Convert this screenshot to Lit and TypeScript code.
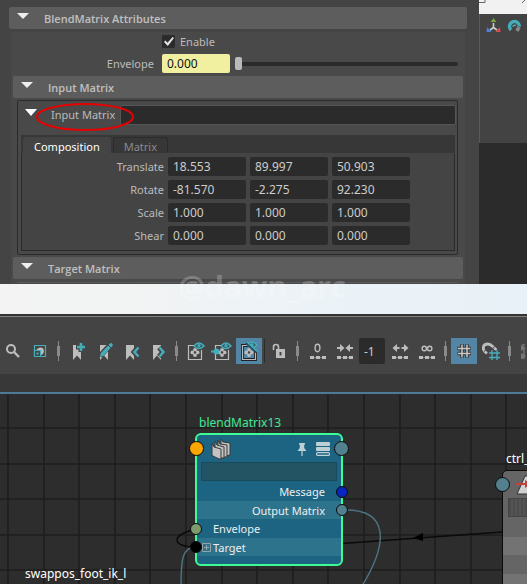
import { LitElement, html, svg, css } from "lit";
import { customElement } from "lit/decorators.js";

const TEAL = "#45adba";
const LIGHT = "#bdbdbd";

/* Toolbar icons, drawn on a 26 x 26 grid. */
const eye = (x: number, y: number) => svg`
  <path d="M${x} ${y + 3} Q${x + 5} ${y - 3} ${x + 10} ${y + 3} Q${x + 5} ${y + 8} ${x} ${y + 3}Z" fill="#35545a" stroke=${TEAL} stroke-width="1.5"/>
  <circle cx=${x + 5} cy=${y + 2.7} r="1.6" fill=${TEAL}/>`;
const frame = svg`
  <path d="M12 7.5H6.500V21.5H19.500V12" fill="none" stroke=${LIGHT} stroke-width="1.2"/>
  <g fill=${LIGHT}><circle cx="13" cy="11.800" r="1.9"/><circle cx="13" cy="17" r="1.9"/><circle cx="10.400" cy="14.400" r="1.9"/><circle cx="15.600" cy="14.400" r="1.9"/></g>
  <circle cx="13" cy="14.400" r="1.2" fill="#444"/>`;
const mark = svg`<path d="M9 7H17V22L13 17.5L9 22Z" fill=${LIGHT}/>`;
const dots = svg`<path d="M5 18h4v3H5zM11 18h4v3h-4zM17 18h4v3h-4zM9.500 19h1v1h-1zM15.500 19h1v1h-1z" fill=${LIGHT}/>`;

const icons: Record<string, unknown> = {
  search: svg`<circle cx="11" cy="11" r="4" fill="none" stroke=${LIGHT} stroke-width="2"/><path d="M14 14L19 19" stroke=${LIGHT} stroke-width="2.4"/>`,
  frameAll: svg`<path d="M7.500 7.500H18.500V18.500H7.500Z" fill="none" stroke=${TEAL} stroke-width="1.2"/>
    <path d="M9.500 12C11 8.500 16.500 8.500 16.800 12C17 15 16 16.500 14 17V12Z" fill=${LIGHT}/>
    <path d="M7.500 12.500H13.500V18.500H7.500Z" fill="#444" stroke=${TEAL} stroke-width="1.200"/><path d="M9.500 14.500h2v2h-2z" fill=${TEAL}/>`,
  markAdd: svg`${mark}<path d="M17 4v10M12 9h10" stroke="#444" stroke-width="5"/><path d="M17 5v8M13 9h8" stroke=${TEAL} stroke-width="2.600"/>`,
  markEdit: svg`${mark}<path d="M9 18L20 6" stroke="#444" stroke-width="5.500"/><path d="M11.500 16L20 7" stroke=${TEAL} stroke-width="3.600" stroke-linecap="round"/><path d="M9 19L10 15L13 17.500Z" fill=${TEAL}/><path d="M17 7L20 10" stroke="#444" stroke-width="1"/>`,
  markPrev: svg`<path d="M8 7H16V22L12 17.500L8 22Z" fill=${LIGHT}/><path d="M20 9.500L16 14L20 18.500" fill="none" stroke="#444" stroke-width="5"/><path d="M20.500 9.500L16.500 14L20.500 18.500" fill="none" stroke=${TEAL} stroke-width="2.500"/>`,
  markNext: svg`<path d="M8 7H16V22L12 17.500L8 22Z" fill=${LIGHT}/><path d="M14 9.500L18 14L14 18.500" fill="none" stroke="#444" stroke-width="5"/><path d="M14.500 9.500L18.500 14L14.500 18.500" fill="none" stroke=${TEAL} stroke-width="2.500"/>`,
  show: svg`${frame}<path d="M12 3h12v8H15L12 9z" fill="#444"/>${eye(12, 5)}`,
  showIn: svg`${frame}<path d="M12 3h12v8H15L12 9z" fill="#444"/>${eye(12, 5)}<path d="M2 13.500h4" stroke=${TEAL} stroke-width="2"/><circle cx="7.500" cy="13.500" r="3" fill=${TEAL}/>`,
  hide: svg`<path d="M12 7.500H6.500V21.500H19.500V12" fill="none" stroke="#222" stroke-width="3"/>${frame}${eye(11, 4)}<path d="M10 5L21 15" stroke="#27485a" stroke-width="2"/><path d="M11 4L22 14" stroke=${TEAL} stroke-width="1.400"/>`,
  unlock: svg`<path d="M7.500 12V9Q7.500 6.500 10 6.500Q12.500 6.500 12.500 9V12" fill="none" stroke=${LIGHT} stroke-width="1.600"/><path d="M10 11h9v9h-9z" fill=${LIGHT}/><path d="M13.500 14h2v3.500h-2z" fill="#444"/>`,
  zero: svg`<ellipse cx="12.500" cy="10" rx="2.400" ry="3.700" fill="none" stroke=${LIGHT} stroke-width="1.400"/>${dots}`,
  shrink: svg`<path d="M5 10h4M21 10h-4" stroke=${LIGHT} stroke-width="2"/><path d="M8 6L12.500 10L8 14ZM18 6L13.500 10L18 14Z" fill=${LIGHT}/>${dots}`,
  grow: svg`<path d="M10 6L5.500 10L10 14ZM17 6L21.500 10L17 14Z" fill=${LIGHT}/><path d="M9 10h3.500M18 10h-3.500" stroke=${LIGHT} stroke-width="2"/>${dots}`,
  infinite: svg`<circle cx="10.300" cy="10.500" r="2.200" fill="none" stroke=${LIGHT} stroke-width="1.400"/><circle cx="15.700" cy="10.500" r="2.200" fill="none" stroke=${LIGHT} stroke-width="1.400"/>${dots}`,
  grid: svg`<path d="M11 6v14M16 6v14M6.500 10.500h13.500M6.500 15.500h13.500" stroke="#333" stroke-width="3.500"/><path d="M11 6.500v13M16 6.500v13M7 10.500h12.500M7 15.500h12.500" stroke="#c9c9c9" stroke-width="1.500"/>`,
  snap: svg`<path d="M9 15.500C3 11 5 6 10 6C14 6 15 9.500 18.500 12" fill="none" stroke=${LIGHT} stroke-width="2.800"/><path d="M6 13.500l3-2.500M14 11.500l2.500-3" stroke="#444" stroke-width="1"/><path d="M14 12v10M19 12v10M11 15h11M11 19.500h11" fill="none" stroke="#444" stroke-width="3"/><path d="M14 12v10M19 12v10M11 15h11M11 19.500h11" fill="none" stroke=${TEAL} stroke-width="1.400"/>`,
  fit: svg`<path d="M7 7H10M14 7H19M7 20H10M14 20H19M9 11V17" stroke="#777" stroke-width="1.500" fill="none"/><path d="M6 7l5 3-5 3zM6 15l5 3-5 3z" fill="#777"/>`,
};

const rows = [
  { name: "Translate", values: ["18.553", "89.997", "50.903"] },
  { name: "Rotate", values: ["-81.570", "-2.275", "92.230"] },
  { name: "Scale", values: ["1.000", "1.000", "1.000"] },
  { name: "Shear", values: ["0.000", "0.000", "0.000"] },
];
const axes = ["X", "Y", "Z"];

const base = css`
  * { box-sizing: border-box; }
  button, input {
    font: inherit;
    color: inherit;
    margin: 0;
    padding: 0;
    border: 0;
    background: none;
    min-width: 0;
  }
  svg { display: block; }
`;

@customElement("attribute-panel")
class AttributePanel extends LitElement {
  static styles = [
    base,
    css`
      :host {
        display: block;
        padding: 7px 12px 0 9px;
        background: #444;
        color: #bbb;
        font-size: 11px;
        line-height: 20px;
      }
      .head {
        display: flex;
        align-items: center;
        gap: 15px;
        width: 100%;
        height: 22px;
        padding: 1px 0 0 8px;
        border-radius: 2px;
        background: #5d5d5d;
        font-family: "Open Sans", "Noto Sans", sans-serif;
        font-weight: 600;
        color: #c0c0c0;
      }
      .tri {
        width: 12px;
        height: 6px;
        margin-bottom: 5px;
        background: #eee;
        clip-path: polygon(0 0, 100% 0, 50% 100%);
      }
      .body {
        margin: 3px 2px 0;
        padding: 3px 2px 0;
        background: #494949;
      }
      .enable {
        display: flex;
        align-items: center;
        gap: 5px;
        height: 13px;
        margin-left: 149px;
      }
      .check {
        appearance: none;
        width: 13px;
        height: 13px;
        border-radius: 1px;
        background: #2b2b2b;
      }
      .check:checked::after {
        content: "";
        display: block;
        width: 10px;
        height: 9px;
        margin: 2px;
        background: #e4e4e4;
        clip-path: polygon(0 55%, 14% 38%, 35% 65%, 86% 0, 100% 12%, 38% 100%);
      }
      .envelope {
        display: grid;
        grid-template-columns: 144px 68px 1fr;
        column-gap: 5px;
        align-items: center;
        margin: 6px 5px 3px 0;
      }
      .envelope label { height: 19px; padding-right: 3px; text-align: right; }
      .num {
        width: 100%;
        height: 19px;
        padding-left: 5px;
        border-radius: 2px;
        background: #2b2b2b;
        color: #ccc;
        font-size: 12px;
      }
      .keyed { background: #f0f0a0; color: #111; }
      .slider {
        appearance: none;
        width: 100%;
        height: 13px;
      }
      .slider::-webkit-slider-runnable-track {
        height: 4px;
        border-radius: 2px;
        background: #2b2b2b;
      }
      .slider::-webkit-slider-thumb {
        appearance: none;
        width: 7px;
        height: 13px;
        margin-top: -5px;
        border-radius: 2px;
        background: #bababa;
      }
      .group {
        margin: 2px 5px 2px 4px;
        padding: 4px 1px 3px 3px;
        border: 1px solid #2b2b2b;
        border-radius: 2px;
      }
      .inner {
        position: relative;
        display: flex;
        align-items: center;
        height: 20px;
        padding-left: 4px;
      }
      .inner .tri { height: 7px; background: #fff; }
      .inner label { width: 69px; margin-left: 14px; white-space: nowrap; }
      .inner .num { flex: 1; border: 1px solid #555; height: 20px; }
      .ring {
        position: absolute;
        left: 14px;
        top: -3px;
      }
      .tabs {
        display: flex;
        gap: 2px;
        height: 18px;
        margin: 10px 1px 0 0;
        padding: 2px 2px 0;
        background: #373737;
      }
      .tab {
        padding: 0 10px;
        border-radius: 3px 3px 0 0;
        line-height: 17px;
        border: 1px solid #2b2b2b;
        border-bottom: 0;
        color: #8a8a8a;
      }
      .on { background: #444; color: #fff; border-color: #444; }
      .pane {
        display: grid;
        gap: 4px;
        margin-right: 1px;
        padding: 3px 0 5px;
        border: 1px solid #2b2b2b;
        border-top-color: #444;
        background: #444;
      }
      .row {
        display: grid;
        grid-template-columns: 142px repeat(3, 78px);
        gap: 4px;
      }
      .row label { height: 19px; text-align: right; }
      .next {
        height: 2px;
        margin: 3px 5px 0 4px;
        border-top: 1px solid #5a5a5a;
      }
    `,
  ];

  render() {
    return html`
      <button class="head"><span class="tri"></span>BlendMatrix Attributes</button>
      <div class="body">
        <label class="enable"><input class="check" type="checkbox" checked />Enable</label>
        <div class="envelope">
          <label for="env">Envelope</label>
          <input id="env" class="num keyed" type="text" value="0.000" />
          <input class="slider" type="range" min="0" max="1" value="0" aria-label="Envelope slider" />
        </div>
        <button class="head"><span class="tri"></span>Input Matrix</button>
        <div class="group">
          <div class="inner">
            <span class="tri"></span>
            <label for="im">Input Matrix</label>
            <input id="im" class="num" type="text" />
            <svg class="ring" width="100" height="30" viewBox="0 0 100 30">
              <ellipse cx="50" cy="15" rx="48" ry="13" fill="none" stroke="#e60000" stroke-width="2" />
            </svg>
          </div>
          <div class="tabs" role="tablist">
            <button class="tab on" role="tab" aria-selected="true">Composition</button>
            <button class="tab" role="tab" aria-selected="false">Matrix</button>
          </div>
          <div class="pane">
            ${rows.map(
              (r) => html`<div class="row">
                <label for=${r.name + "X"}>${r.name}</label>
                ${r.values.map(
                  (v, i) => html`<input
                    id=${r.name + axes[i]}
                    class="num"
                    type="text"
                    aria-label=${r.name + " " + axes[i]}
                    .value=${v}
                  />`
                )}
              </div>`
            )}
          </div>
        </div>
        <button class="head"><span class="tri"></span>Target Matrix</button>
        <div class="next"></div>
      </div>
    `;
  }
}

@customElement("editor-toolbar")
class EditorToolbar extends LitElement {
  static styles = [
    base,
    css`
      :host {
        display: flex;
        align-items: center;
        gap: 1px;
        height: 60px;
        padding-top: 14px;
        background: linear-gradient(#333 2px, #808080 2px, #808080 3px, #444 3px);
        overflow: hidden;
      }
      .tool { flex: none; width: 26px; height: 26px; }
      .active { background: #5285a6; }
      .sep {
        flex: none;
        width: 9px;
        height: 20px;
        background:
          linear-gradient(#8a8a8a, #8a8a8a) center / 3px 10px no-repeat,
          linear-gradient(#8a8a8a, #8a8a8a) center / 1px 20px no-repeat;
      }
      .line { flex: none; width: 1px; height: 24px; margin: 0 0 0 1px; background: #2b2b2b; }
      .depth {
        flex: none;
        width: 26px;
        height: 26px;
        margin-right: 1px;
        padding-left: 5px;
        border-radius: 2px;
        background: #2b2b2b;
        color: #ccc;
      }
      .lead { margin-left: 2px; }
    `,
  ];

  private tool(name: string, label: string, extra = "") {
    return html`<button class="tool ${extra}" aria-label=${label}>
      <svg width="26" height="26" viewBox="0 0 26 26">${icons[name]}</svg>
    </button>`;
  }

  render() {
    const sep = html`<span class="sep"></span>`;
    return html`
      ${this.tool("search", "Search")} ${this.tool("frameAll", "Frame all")} ${sep}
      ${this.tool("markAdd", "Add bookmark")} ${this.tool("markEdit", "Edit bookmarks")}
      ${this.tool("markPrev", "Previous bookmark")} ${this.tool("markNext", "Next bookmark")} ${sep}
      ${this.tool("show", "Show shapes")} ${this.tool("showIn", "Show inputs")}
      ${this.tool("hide", "Hide unconnected", "active")}
      <span class="line"></span>
      ${this.tool("unlock", "Unlock")} ${sep}
      ${this.tool("zero", "Depth zero", "lead")} ${this.tool("shrink", "Decrease depth")}
      <input class="depth" type="text" value="-1" aria-label="Traversal depth" />
      ${this.tool("grow", "Increase depth")} ${this.tool("infinite", "Unlimited depth")} ${sep}
      ${this.tool("grid", "Show grid", "active")} ${this.tool("snap", "Snap to grid")} ${sep}
      ${this.tool("fit", "Fit")}
    `;
  }
}

@customElement("node-canvas")
class NodeCanvas extends LitElement {
  static styles = [
    base,
    css`
      :host {
        display: block;
        position: relative;
        overflow: hidden;
        background: #2d2d2d;
        color: #eee;
      }
      .wires { position: absolute; left: 0; top: 0; width: 100%; height: 100%; }
      .title { position: absolute; line-height: 18px; white-space: nowrap; }
      .t1 { left: 199px; top: 20px; color: #3fe896; }
      .t2 { left: 506px; top: 56px; color: #fff; }
      .t3 { left: 25px; top: 171px; color: #fff; }
      .node {
        position: absolute;
        left: 195px;
        top: 39px;
        width: 148px;
        border: 2px solid #3dfc98;
        border-radius: 6px;
        background: #1c6482;
        font-size: 11px;
      }
      .top {
        display: flex;
        align-items: center;
        height: 27px;
        padding: 0 11px 0 14px;
      }
      .pin { margin-left: auto; margin-right: 9px; }
      .filter {
        display: block;
        width: calc(100% - 8px);
        height: 19px;
        margin: 0 4px 1px;
        border: 1px solid #194a5c;
        background: #235464;
      }
      .attr {
        position: relative;
        display: flex;
        align-items: center;
        height: 19px;
        padding: 0 16px;
      }
      .out { justify-content: flex-end; }
      .alt { height: 18px; background: #2e738c; }
      .foot { height: 8px; }
      .port {
        position: absolute;
        width: 12px;
        height: 12px;
        border: 1px solid #0a0a0a;
        border-radius: 50%;
        background: #52808f;
      }
      .left { left: -7px; }
      .right { right: -7px; }
      .big { width: 15px; height: 15px; }
      .big.left, .big.right { margin: 0 -1px; }
      .orange { background: #ffa500; }
      .blue { background: #0a24c0; }
      .green { background: #7d9a6c; }
      .black { background: #000; }
      .plus { position: absolute; left: 5px; }
      .ctrl {
        position: absolute;
        left: 502px;
        top: 76px;
        width: 148px;
        height: 140px;
        border: 1px solid #0a0a0a;
        border-radius: 5px;
        background: linear-gradient(#656565 66px, #737373 66px, #737373 84px, #656565 84px, #656565 103px, #737373 103px);
      }
      .ctrl .filter {
        margin: 0 5px;
        border-color: #444;
        background: repeating-linear-gradient(90deg, #4c4c4c 0 2px, #545454 2px 4px);
      }
      .ctrl .top { padding-left: 13px; }
      .ctrl .big { top: 6px; }
    `,
  ];

  private gridLines() {
    const pitch = 35.6;
    const lines: string[] = [];
    for (let i = 0; i < 80; i++) {
      lines.push(`M${Math.round(8 + i * pitch)} 0V1400`);
      if (i < 40) lines.push(`M0 ${Math.round(34 + i * pitch)}H2900`);
    }
    return lines.join("");
  }

  render() {
    return html`
      <svg class="wires">
        <path d=${this.gridLines()} fill="none" stroke="#1e1e1e" stroke-width="1.6" />
        <g fill="none" stroke="#0a0a0a" stroke-width="1.4">
          <path d="M192 136C172 142 172 151 192 153" />
          <path d="M335 150L502 138" />
        </g>
        <path d="M413 144L423 139V147Z" fill="#000" />
        <g fill="none" stroke="#4c7482" stroke-width="1.4">
          <path d="M196 153C182 153 181 166 181 192" />
          <path d="M346 116C388 116 389 148 362 192" />
        </g>
      </svg>
      <span class="title t1">blendMatrix13</span>
      <span class="title t2">ctrl_</span>
      <span class="title t3">swappos_foot_ik_l</span>
      <div class="node">
        <div class="top">
          <i class="port big left orange"></i>
          <svg width="20" height="22" viewBox="0 0 20 22">
            <g fill="#c2c2c2" stroke="#3a3a3a" stroke-width="1">
              <path d="M10 1L12 4L19 5V17L15 18L10 14Z" />
              <path d="M7 2L9 6L16 7V19L12 19L7 15Z" />
              <path d="M4 3L6 7L13 9V20L9 20L4 17Z" />
              <path d="M1 5L3 9L10 11V21.500L6 20L1 17.500Z" />
            </g>
          </svg>
          <svg class="pin" width="10" height="14" viewBox="0 0 10 14">
            <path d="M2 1H8V2.500H7.200V6L9.500 9H.5L2.800 6V2.500H2ZM4.400 9H5.600V14H4.400Z" fill="#bdd0d6" />
          </svg>
          <svg width="14" height="14" viewBox="0 0 14 14">
            <rect width="14" height="4" rx="1" fill="#bdd0d6" />
            <rect y="5" width="14" height="4" rx="1" fill="#bdd0d6" />
            <rect x=".6" y="10.600" width="12.800" height="2.800" rx="1" fill="none" stroke="#bdd0d6" stroke-width="1.200" />
          </svg>
          <i class="port big right"></i>
        </div>
        <input class="filter" type="text" aria-label="Filter attributes" />
        <div class="attr out">Message<i class="port right blue"></i></div>
        <div class="attr out alt">Output Matrix<i class="port right"></i></div>
        <div class="attr"><i class="port left green"></i>Envelope</div>
        <div class="attr alt">
          <i class="port left black"></i>
          <svg class="plus" width="9" height="9" viewBox="0 0 9 9">
            <path d="M.5 .5h8v8h-8zM4.500 2v5M2 4.500h5" fill="none" stroke="#93a5ab" />
          </svg>
          Target
        </div>
        <div class="foot"></div>
      </div>
      <div class="ctrl">
        <i class="port big left"></i>
        <div class="top">
          <svg width="24" height="20" viewBox="0 0 24 20">
            <path d="M9 1H22L16 19H1Z" fill="#d0d0d0" stroke="#333" />
            <path d="M0 9H14" stroke="#c8403c" stroke-width="2" />
            <path d="M9 5L15 9L9 13Z" fill="#c8403c" />
          </svg>
        </div>
        <input class="filter" type="text" aria-label="Filter control attributes" />
      </div>
    `;
  }
}

@customElement("app-root")
class AppRoot extends LitElement {
  static styles = [
    base,
    css`
      :host {
        display: flex;
        flex-direction: column;
        min-height: 100vh;
        background: #2d2d2d;
        font: 12px "Noto Sans", "Open Sans", sans-serif;
      }
      .upper { position: relative; display: flex; overflow: hidden; }
      attribute-panel { flex: 1; }
      .side {
        display: flex;
        flex-direction: column;
        width: 48px;
        background: #2b2b2b;
      }
      .chrome {
        height: 14px;
        background: #f1f1f1;
      }
      .tools {
        display: flex;
        gap: 6px;
        height: 129px;
        padding: 4px 0 0 6px;
        border-left: 1px solid #5a5a5a;
        background: #434343;
      }
      .tools button { width: 15px; height: 15px; }
      .band {
        position: relative;
        height: 30px;
        background: linear-gradient(90deg, #f3f3f3, #f2f3f3 25%, #edf3f7 50%, #e8f1f7);
      }
      .stamp {
        position: absolute;
        left: 178px;
        top: -14px;
        color: rgba(255, 255, 255, 0.24);
        font-size: 30px;
        font-weight: 700;
        line-height: 34px;
        white-space: nowrap;
      }
      .strip {
        height: 20px;
        border-bottom: 2px solid #4d7a97;
        background: #383838;
      }
      node-canvas { flex: 1; min-height: 190px; }
    `,
  ];

  render() {
    return html`
      <div class="upper">
        <attribute-panel></attribute-panel>
        <div class="side">
          <div class="chrome">
            <svg width="48" height="14" viewBox="0 0 48 14">
              <path d="M0 2.500H6V0" fill="none" stroke="#666" />
              <path d="M43 3L46 0" stroke="#666" />
            </svg>
          </div>
          <div class="tools">
            <button aria-label="Pivot">
              <svg width="15" height="15" viewBox="0 0 15 15">
                <path d="M7.500 5V9.500L4 12M7.500 9.500L11 12" fill="none" stroke="#ccc" stroke-width="1.600" />
                <path d="M7.500 0L10.500 4H4.500Z" fill="#76a83c" />
                <path d="M1 9L5.500 14H.5Z" fill="#4a80e0" />
                <path d="M14 9L9.500 14H14.500Z" fill="#d84c4c" />
              </svg>
            </button>
            <button aria-label="Rotate snap">
              <svg width="15" height="15" viewBox="0 0 15 15">
                <path d="M4 12A5 5 0 1 1 12.500 8.500" fill="none" stroke="#45adba" stroke-width="3.400" />
                <path d="M12 9L10 13" stroke="#888" stroke-width="3.600" />
                <path d="M6 9Q6 6.500 9 7.500" fill="none" stroke="#45adba" stroke-width="1.600" />
              </svg>
            </button>
          </div>
        </div>
      </div>
      <div class="band"><span class="stamp">@dawn_arc</span></div>
      <editor-toolbar></editor-toolbar>
      <div class="strip"></div>
      <node-canvas></node-canvas>
    `;
  }
}
